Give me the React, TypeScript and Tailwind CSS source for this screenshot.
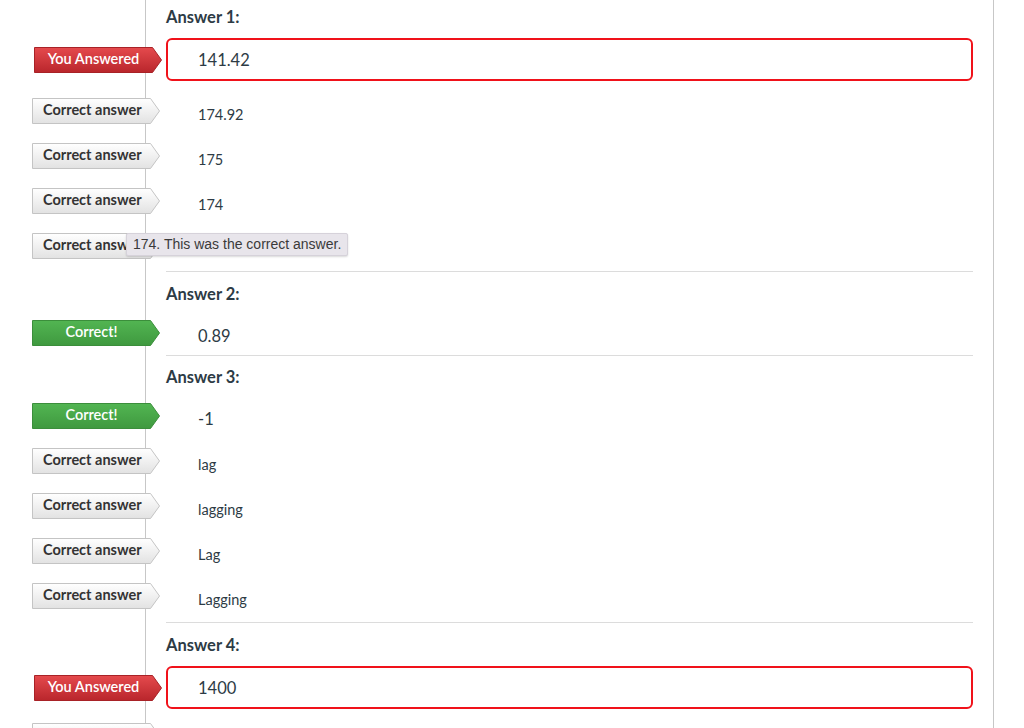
import React from "react";

type Kind = "red" | "green" | "gray";

const grad: Record<Kind, [string, string, string]> = {
  red: ["#e54a4d", "#b9262c", "#a82227"],
  green: ["#52b552", "#3f993f", "#3b8e3b"],
  gray: ["#ffffff", "#e2e2e2", "#c4c4c4"],
};

function Label({ kind, text, offset }: { kind: Kind; text: string; offset: "a" | "b" }) {
  const [top, bottom, stroke] = grad[kind];
  const id = `lg-${kind}`;
  const textCls =
    kind === "gray"
      ? "text-[#333] font-bold justify-start pl-[11px] pb-[1px]"
      : "text-white font-semibold justify-center pr-[9px] pb-[1px]";
  return (
    <div
      className={`relative h-[26px] w-[128px] shrink-0 ${offset === "a" ? "-ml-[134px]" : "-ml-[132px]"}`}
    >
      <svg className="absolute inset-0" width="128" height="26" viewBox="0 0 128 26">
        <defs>
          <linearGradient id={id} x1="0" y1="0" x2="0" y2="1">
            <stop offset="0" stopColor={top} />
            <stop offset="1" stopColor={bottom} />
          </linearGradient>
        </defs>
        <polygon
          points="0.5,0.5 118.5,0.5 127.5,13 118.5,25.5 0.5,25.5"
          fill={`url(#${id})`}
          stroke={stroke}
          strokeWidth="1"
        />
      </svg>
      <div
        className={`relative flex h-full items-center text-[14.5px] leading-none ${textCls}`}
        style={{ fontFamily: "Lato, 'Noto Sans', sans-serif" }}
      >
        {text}
      </div>
    </div>
  );
}

function Heading({ children, pt }: { children: React.ReactNode; pt: string }) {
  return <div className={`${pt} text-[16.5px] font-bold leading-[24px] text-[#2d3b45]`}>{children}</div>;
}

function YouAnswered({ value, mt }: { value: string; mt: string }) {
  return (
    <div className={`flex items-center ${mt}`}>
      <Label kind="red" text="You Answered" offset="b" />
      <div className="ml-[4px] flex h-[43px] flex-1 items-center rounded-[6px] border-2 border-[#f0121a] pl-[30px] pt-[2px] text-[16.5px] text-[#2d3b45]">
        {value}
      </div>
    </div>
  );
}

function CorrectRow({ value, big, children }: { value: string; big?: boolean; children?: React.ReactNode }) {
  return (
    <div className="relative flex h-[45px] items-center">
      <Label kind={big ? "green" : "gray"} text={big ? "Correct!" : "Correct answer"} offset="a" />
      <div className={`ml-[38px] pt-[8px] text-[#2d3b45] ${big ? "text-[16.5px]" : "text-[14.5px]"}`}>{value}</div>
      {children}
    </div>
  );
}

export default function App() {
  return (
    <div className="h-[728px] overflow-hidden bg-white" style={{ fontFamily: "Lato, 'Noto Sans', sans-serif" }}>
      <div className="ml-[145px] min-h-[728px] w-[849px] border-l border-r border-[#c7c7c7] pl-[20px] pr-[20px]">
        <section className="border-b border-[#dcdcdc]">
          <Heading pt="pt-[5px]">Answer 1:</Heading>
          <YouAnswered value="141.42" mt="mt-[9px]" />
          <div className="mt-[7px] pb-[3px]">
            <CorrectRow value="174.92" />
            <CorrectRow value="175" />
            <CorrectRow value="174" />
            <CorrectRow value="174">
              <div
                className="absolute left-[-40px] top-[10px] z-10 flex h-[23px] items-center whitespace-nowrap rounded-[2px] border border-[#d6d2da] bg-[#e8e5eb] px-[6px] text-[14px] text-[#3a3a3a] shadow-[0_1px_2px_rgba(0,0,0,0.15)]"
                style={{ fontFamily: "'Liberation Sans', Arial, sans-serif" }}
              >
                174. This was the correct answer.
              </div>
            </CorrectRow>
          </div>
        </section>
        <section className="border-b border-[#dcdcdc]">
          <Heading pt="pt-[10px]">Answer 2:</Heading>
          <div className="mt-[4px]">
            <CorrectRow value="0.89" big />
          </div>
        </section>
        <section className="border-b border-[#dcdcdc]">
          <Heading pt="pt-[9px]">Answer 3:</Heading>
          <div className="mt-[4px] pb-[4px]">
            <CorrectRow value="-1" big />
            <CorrectRow value="lag" />
            <CorrectRow value="lagging" />
            <CorrectRow value="Lag" />
            <CorrectRow value="Lagging" />
          </div>
        </section>
        <section>
          <Heading pt="pt-[10px]">Answer 4:</Heading>
          <YouAnswered value="1400" mt="mt-[9px]" />
          <div className="mt-[4px]">
            <CorrectRow value="1400" />
          </div>
        </section>
      </div>
    </div>
  );
}
